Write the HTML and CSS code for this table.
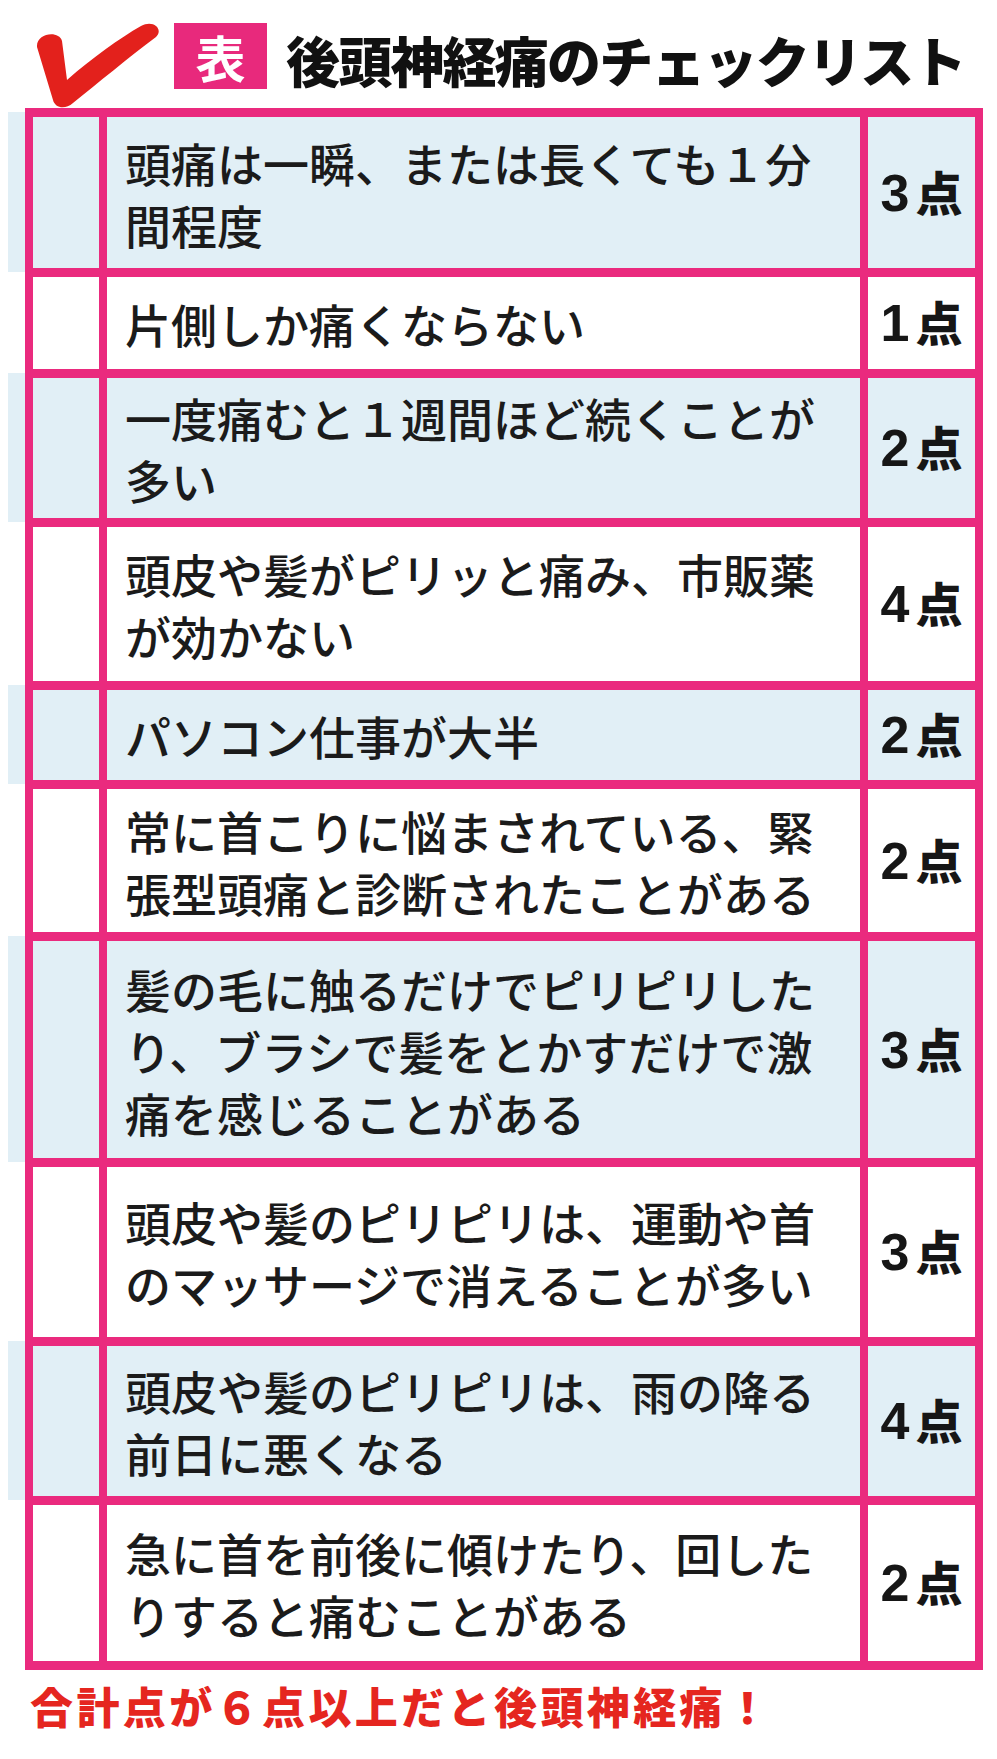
FILE: index.html
```html
<!DOCTYPE html>
<html lang="ja">
<head>
<meta charset="utf-8">
<title>後頭神経痛のチェックリスト</title>
<link rel="stylesheet" href="styles.css">
</head>
<body>
<div class="page">
  <header class="header">
    <svg class="check" viewBox="34 20 130 90" width="130" height="90" aria-hidden="true">
      <path d="M37 47 C36 33 59 30 62 41 L67 80 C92 58 120 38 141 26 C153 19 164 29 156 37 C128 58 98 83 73 103 C65 110 55 108 53 100 Z" fill="#e3211c"/>
    </svg>
    <div class="tag">表</div>
    <h1 class="title">後頭神経痛のチェックリスト</h1>
  </header>

  <div class="table">
    <div class="row blue">
      <div class="cell box"></div>
      <div class="cell text">頭痛は一瞬、または長くても１分<br>間程度</div>
      <div class="cell score"><span class="num">3</span><span class="ten">点</span></div>
    </div>
    <div class="row">
      <div class="cell box"></div>
      <div class="cell text">片側しか痛くならない</div>
      <div class="cell score"><span class="num">1</span><span class="ten">点</span></div>
    </div>
    <div class="row blue">
      <div class="cell box"></div>
      <div class="cell text">一度痛むと１週間ほど続くことが<br>多い</div>
      <div class="cell score"><span class="num">2</span><span class="ten">点</span></div>
    </div>
    <div class="row">
      <div class="cell box"></div>
      <div class="cell text">頭皮や髪がピリッと痛み、市販薬<br>が効かない</div>
      <div class="cell score"><span class="num">4</span><span class="ten">点</span></div>
    </div>
    <div class="row blue">
      <div class="cell box"></div>
      <div class="cell text">パソコン仕事が大半</div>
      <div class="cell score"><span class="num">2</span><span class="ten">点</span></div>
    </div>
    <div class="row">
      <div class="cell box"></div>
      <div class="cell text">常に首こりに悩まされている、緊<br>張型頭痛と診断されたことがある</div>
      <div class="cell score"><span class="num">2</span><span class="ten">点</span></div>
    </div>
    <div class="row blue">
      <div class="cell box"></div>
      <div class="cell text">髪の毛に触るだけでピリピリした<br>り、ブラシで髪をとかすだけで激<br>痛を感じることがある</div>
      <div class="cell score"><span class="num">3</span><span class="ten">点</span></div>
    </div>
    <div class="row">
      <div class="cell box"></div>
      <div class="cell text">頭皮や髪のピリピリは、運動や首<br>のマッサージで消えることが多い</div>
      <div class="cell score"><span class="num">3</span><span class="ten">点</span></div>
    </div>
    <div class="row blue">
      <div class="cell box"></div>
      <div class="cell text">頭皮や髪のピリピリは、雨の降る<br>前日に悪くなる</div>
      <div class="cell score"><span class="num">4</span><span class="ten">点</span></div>
    </div>
    <div class="row">
      <div class="cell box"></div>
      <div class="cell text">急に首を前後に傾けたり、回した<br>りすると痛むことがある</div>
      <div class="cell score"><span class="num">2</span><span class="ten">点</span></div>
    </div>
  </div>

  <p class="footer">合計点が６点以上だと後頭神経痛！</p>
</div>
</body>
</html>
```

FILE: styles.css
```css
html, body {
  margin: 0;
  padding: 0;
  background: #ffffff;
}

body {
  font-family: "Noto Sans CJK JP", "Noto Sans", sans-serif;
  color: #1b1b1b;
}

.page {
  width: 997px;
}

/* ---------- header ---------- */
.header {
  display: flex;
  align-items: flex-start;
  height: 108px;
}

.check {
  display: block;
  margin-left: 34px;
  margin-top: 20px;
  flex: none;
}

.tag {
  flex: none;
  width: 93px;
  height: 66px;
  margin-left: 10px;
  margin-top: 23px;
  background: #e8297c;
  color: #ffffff;
  font-size: 50px;
  font-weight: 700;
  line-height: 66px;
  text-align: center;
}

.title {
  margin: 28px 0 0 19px;
  font-size: 54px;
  line-height: 64px;
  font-weight: 900;
  letter-spacing: -1.8px;
  color: #111111;
  white-space: nowrap;
}

/* ---------- table ---------- */
.table {
  margin-left: 25px;
  width: 958px;
  box-sizing: border-box;
  display: grid;
  grid-template-columns: 66px 1fr 107px;
  grid-template-rows: 151px 92px 140px 154px 90px 143px 217px 170px 150px 156px;
  gap: 9px 8px;
  padding: 9px 8px;
  background: #ea2a7e;
}

.row {
  display: contents;
}

.cell {
  background: #ffffff;
}

.row.blue .cell {
  background: #e1eff6;
}

.box {
  position: relative;
}

.row.blue .box::before {
  content: "";
  position: absolute;
  left: -25px;
  width: 17px;
  top: -5px;
  bottom: -4px;
  background: #e1eff6;
}

.text {
  display: flex;
  align-items: center;
  padding-left: 18px;
  font-size: 46px;
  line-height: 62px;
  font-weight: 500;
  color: #1b1b1b;
  white-space: nowrap;
}

.score {
  display: flex;
  align-items: baseline;
  justify-content: center;
  align-content: center;
  flex-wrap: wrap;
  color: #161616;
}

.num {
  font-family: "Liberation Sans", "Noto Sans CJK JP", sans-serif;
  font-size: 52px;
  font-weight: 700;
  line-height: 1;
}

.ten {
  font-size: 47px;
  font-weight: 900;
  line-height: 1;
  margin-left: 6px;
}

/* ---------- footer ---------- */
.footer {
  margin: 9px 0 0 30px;
  font-size: 43px;
  line-height: 52px;
  font-weight: 900;
  letter-spacing: 3.4px;
  color: #e5261f;
  white-space: nowrap;
}
```
